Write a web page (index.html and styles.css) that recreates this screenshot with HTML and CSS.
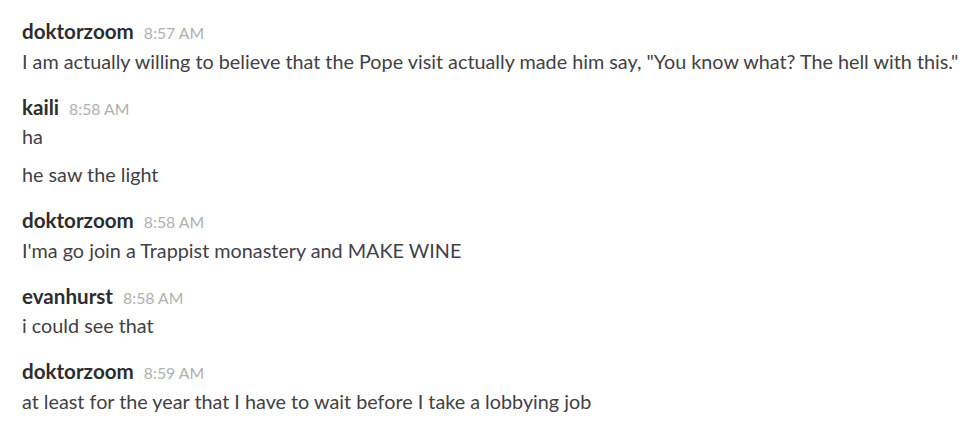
FILE: index.html
```html
<!DOCTYPE html>
<html>
<head>
<meta charset="utf-8">
<link rel="stylesheet" href="styles.css">
</head>
<body>
<div class="chat">
  <div class="msg">
    <div class="head"><span class="name">doktorzoom</span><span class="time">8:57 AM</span></div>
    <div class="text">I am actually willing to believe that the Pope visit actually made him say, "You know what? The hell with this."</div>
  </div>
  <div class="msg">
    <div class="head"><span class="name">kaili</span><span class="time">8:58 AM</span></div>
    <div class="text">ha</div>
    <div class="text cont">he saw the light</div>
  </div>
  <div class="msg">
    <div class="head"><span class="name">doktorzoom</span><span class="time">8:58 AM</span></div>
    <div class="text">I'ma go join a Trappist monastery and MAKE WINE</div>
  </div>
  <div class="msg">
    <div class="head"><span class="name">evanhurst</span><span class="time">8:58 AM</span></div>
    <div class="text">i could see that</div>
  </div>
  <div class="msg">
    <div class="head"><span class="name">doktorzoom</span><span class="time">8:59 AM</span></div>
    <div class="text">at least for the year that I have to wait before I take a lobbying job</div>
  </div>
</div>
</body>
</html>
```
FILE: styles.css
```css
html, body {
  margin: 0;
  padding: 0;
  background: #ffffff;
}
body {
  font-family: Lato, "Liberation Sans", sans-serif;
  width: 980px;
  height: 429px;
  overflow: hidden;
}
.chat {
  padding: 20px 0 0 22px;
  display: flex;
  flex-direction: column;
  gap: 19px;
}
.msg {
  display: flex;
  flex-direction: column;
}
.head {
  display: flex;
  align-items: baseline;
  gap: 10px;
  height: 23px;
  line-height: 23px;
}
.name {
  font-weight: 700;
  font-size: 20.6px;
  color: #2c2d30;
}
.time {
  font-size: 15.8px;
  color: #b0b0b0;
}
.text {
  font-size: 19.8px;
  line-height: 31px;
  color: #424145;
  margin-top: 2.5px;
}
.text.cont {
  margin-top: 7px;
}
```
